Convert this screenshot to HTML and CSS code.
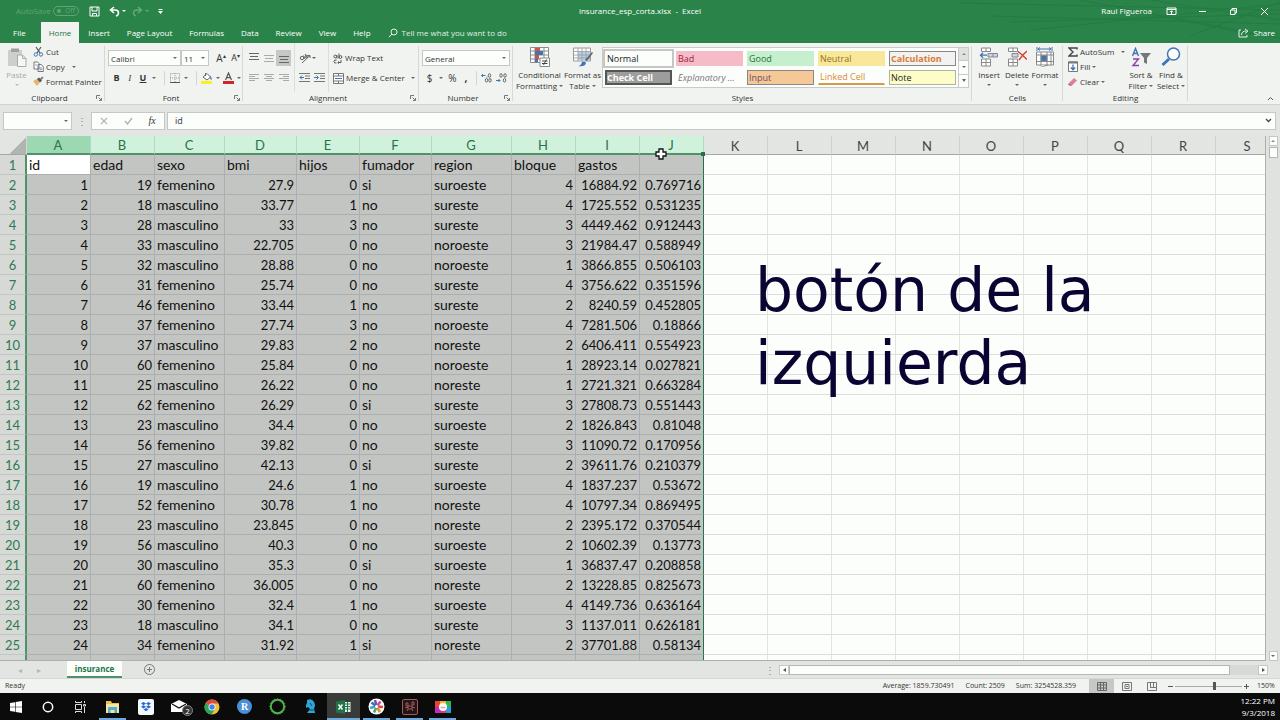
FILE: index.html
```html
<!DOCTYPE html>
<html lang="en">
<head>
<meta charset="utf-8">
<title>insurance_esp_corta.xlsx - Excel</title>
<link rel="stylesheet" href="styles.css">
</head>
<body>
<header class="top">
  <svg class="swirls" width="420" height="43" viewBox="0 0 420 43" fill="none" stroke="#257b43" stroke-width="1"><path d="M100 3L420 10M130 16L420 24M170 30L420 4M220 0L420 38M290 0L420 20M150 22L420 14M330 36L420 2M260 8L400 36"/></svg>
  <div class="titlebar">
    <div class="quick">
      <span class="autosave">AutoSave</span>
      <button class="toggle"><i></i>Off</button>
      <button class="qa save" aria-label="Save"><svg width="11" height="11" viewBox="0 0 11 11" fill="none" stroke="#fff"><path d="M1 1h9v9H1zM3 1v4h5V1M3.500 10V7.500h4V10"/></svg></button>
      <button class="qa" aria-label="Undo"><svg width="18" height="11" viewBox="0 0 18 11"><path d="M5 1L1.500 4L5 7M2 4h4c5 0 4 5 1 6" fill="none" stroke="#fff" stroke-width="1.600"/><path d="M13 4h4l-2 2z" fill="#fff"/></svg></button>
      <button class="qa faded" aria-label="Redo"><svg width="18" height="11" viewBox="0 0 18 11"><path d="M6 1l3.500 3L6 7M9 4H5C0 4 1 9 4 10" fill="none" stroke="#fff" stroke-width="1.300"/><path d="M13 4h4l-2 2z" fill="#fff"/></svg></button>
      <button class="qa" aria-label="Customize toolbar"><svg width="7" height="7" viewBox="0 0 7 7" fill="#fff"><path d="M1.500 1h4v1h-4zM1 3h5L3.500 6z"/></svg></button>
    </div>
    <div class="doc">insurance_esp_corta.xlsx&nbsp; -&nbsp; Excel</div>
    <div class="user">
      <span class="name">Raul Figueroa</span>
      <button aria-label="Ribbon options"><svg width="11" height="9" viewBox="0 0 11 9" fill="none" stroke="#fff"><path d="M1 1h9v6.500H1zM1 2.500h9M5.500 7V4M4 5.200L5.500 3.700L7 5.200"/></svg></button>
      <button aria-label="Minimize"><svg width="9" height="9" viewBox="0 0 9 9" stroke="#fff"><path d="M1 4.500h7"/></svg></button>
      <button aria-label="Restore"><svg width="9" height="9" viewBox="0 0 9 9" fill="none" stroke="#fff"><path d="M1.500 3h4.500v4.500H1.500zM3 3V1.500h4.500V6H6"/></svg></button>
      <button aria-label="Close"><svg width="9" height="9" viewBox="0 0 9 9" stroke="#fff"><path d="M1 1l7 7M8 1L1 8"/></svg></button>
    </div>
  </div>
  <nav class="tabs">
    <button class="file">File</button><button class="on">Home</button><button>Insert</button><button>Page Layout</button><button>Formulas</button><button>Data</button><button>Review</button><button>View</button><button>Help</button>
    <button class="tell"><svg width="10" height="10" viewBox="0 0 10 10" fill="none" stroke="#e6f3ea"><circle cx="6" cy="4" r="3"/><path d="M4 6L.8 9.200"/></svg>Tell me what you want to do</button>
    <button class="share"><svg width="11" height="10" viewBox="0 0 11 10" fill="none" stroke="#e6f3ea"><path d="M3 2H1v7h8V7M3.500 7c0-3 2-4 5-4M7 1l3 2.200L7 5.500"/></svg>Share</button>
  </nav>
</header>

<section class="ribbon">
  <div class="group clipboard">
    <div class="body">
      <button class="big paste"><svg width="20" height="20" viewBox="0 0 20 20"><path d="M1 3h14v16H1z" fill="#cdcecd"/><path d="M4 1.500h8V5H4z" fill="#9fa09f"/><path d="M10.500 8h5l3.500 3.500V19.500h-8.500z" fill="#f6f7f6" stroke="#aaabaa"/><path d="M15.500 8v3.500H19" fill="none" stroke="#aaabaa"/></svg><span>Paste</span><i class="car"></i></button>
      <div class="stack">
        <button><svg width="11" height="11" viewBox="0 0 11 11" fill="none"><path d="M3 1l4 6M8 1L4 7" stroke="#555" stroke-width="1.200"/><circle cx="2.800" cy="8.500" r="1.700" stroke="#3f74b5"/><circle cx="8" cy="8.500" r="1.700" stroke="#3f74b5"/></svg>Cut</button>
        <button><svg width="11" height="11" viewBox="0 0 11 11" fill="#fff" stroke="#777"><path d="M1 1h3.500L6 2.500V8H1zM5 3.500h3L10.300 5.500v5H5z"/><path d="M6.500 7h2.500M6.500 8.700h2.500M2.300 4h1.500" stroke="#3f74b5" stroke-width=".8"/></svg>Copy<i class="car far"></i></button>
        <button><svg width="11" height="11" viewBox="0 0 11 11"><path d="M0 5l4-2 3 3-3 4z" fill="#e8b36a"/><path d="M4 3l2-1.500L9 4.500 7 6.500z" fill="#555"/><path d="M7 2.500L9.500.5l1 1L8.500 4z" fill="#777"/></svg>Format Painter</button>
      </div>
    </div>
    <div class="cap"><span>Clipboard</span><svg class="launch" width="6" height="6" viewBox="0 0 6 6" fill="none" stroke="#777"><path d="M.5 4V.5H4M2.500 2.500L5 5M5.500 3v2.500H3"/></svg></div>
  </div>

  <div class="group font">
    <div class="body rows">
      <div class="line">
        <label class="combo fam"><input value="Calibri" aria-label="Font"><i class="car"></i></label><label class="combo size"><input value="11" aria-label="Font size"><i class="car"></i></label>
        <button class="grow">A<sup>▴</sup></button><button class="shrink">A<sup>▾</sup></button>
      </div>
      <div class="line fmt">
        <button class="b">B</button><button class="it">I</button><button class="u">U</button><i class="car"></i><i class="sep"></i>
        <button aria-label="Borders"><svg width="10" height="10" viewBox="0 0 10 10" fill="none" stroke="#999" stroke-dasharray="1 1"><path d="M.5.5h9v9h-9zM5 0v10M0 5h10"/><path d="M0 9.500h10" stroke="#555" stroke-dasharray="none"/></svg></button><i class="car"></i><i class="sep"></i>
        <button aria-label="Fill color"><svg width="12" height="12" viewBox="0 0 12 12"><path d="M2 5l4-3.500L9.500 5 6 8z" fill="#fff" stroke="#666"/><path d="M4.500 1v3" stroke="#666"/><path d="M9.500 4q2 2 1 4-2-1-1-4" fill="#3f74b5"/><path d="M0 9h11v3H0z" fill="#f4f321"/></svg></button><i class="car"></i>
        <button aria-label="Font color"><svg width="11" height="12" viewBox="0 0 11 12"><path d="M2.500 8L5.500 1l3 7M3.500 5.700h4" fill="none" stroke="#555" stroke-width="1.200"/><path d="M0 9h11v3H0z" fill="#d2222a"/></svg></button><i class="car"></i>
      </div>
    </div>
    <div class="cap"><span>Font</span><svg class="launch" width="6" height="6" viewBox="0 0 6 6" fill="none" stroke="#777"><path d="M.5 4V.5H4M2.500 2.500L5 5M5.500 3v2.500H3"/></svg></div>
  </div>

  <div class="group align">
    <div class="body">
      <div class="rows grid3">
        <div class="line"><button aria-label="Top align"><svg width="10" height="12" viewBox="0 0 10 12" stroke="#666"><path d="M0 1.500h10M1 4.500h8M0 7.500h10" /></svg></button><button aria-label="Middle align"><svg width="10" height="12" viewBox="0 0 10 12" stroke="#aaa"><path d="M0 3.500h10M1 6.500h8M0 9.500h10"/></svg></button><button class="down" aria-label="Bottom align"><svg width="10" height="12" viewBox="0 0 10 12" stroke="#666"><path d="M0 4.500h10M1 7.500h8M0 10.500h10"/></svg></button></div>
        <div class="line"><button aria-label="Align left"><svg width="10" height="10" viewBox="0 0 10 10" stroke="#aaa"><path d="M0 1.500h10M0 3.500h6M0 5.500h10M0 7.500h6"/></svg></button><button aria-label="Center"><svg width="10" height="10" viewBox="0 0 10 10" stroke="#aaa"><path d="M0 1.500h10M2 3.500h6M0 5.500h10M2 7.500h6"/></svg></button><button aria-label="Align right"><svg width="10" height="10" viewBox="0 0 10 10" stroke="#aaa"><path d="M0 1.500h10M4 3.500h6M0 5.500h10M4 7.500h6"/></svg></button></div>
      </div>
      <div class="rows indent">
        <div class="line"><button aria-label="Orientation"><svg width="12" height="12" viewBox="0 0 12 12" fill="none" stroke="#666"><circle cx="3" cy="6" r="1.700"/><path d="M4.500 3.500L6 7M6 2l2.500 4"/><circle cx="7.500" cy="4.500" r="1.300"/><path d="M3 11L11 3.500M11 6V3.500H8.500"/></svg></button><i class="car"></i></div>
        <div class="line"><button aria-label="Decrease indent"><svg width="12" height="10" viewBox="0 0 12 10" fill="none" stroke="#777"><path d="M0 .5h11M6 3h5M6 5.500h5M0 8.500h11"/><path d="M5 4.500H1M3 2.500l-2 2 2 2" stroke="#3f74b5"/></svg></button><button aria-label="Increase indent"><svg width="12" height="10" viewBox="0 0 12 10" fill="none" stroke="#777"><path d="M0 .5h11M6 3h5M6 5.500h5M0 8.500h11"/><path d="M0 4.500h4M2.500 2.500l2 2-2 2" stroke="#3f74b5"/></svg></button></div>
      </div>
      <div class="rows wrap">
        <div class="line"><button><svg width="10" height="11" viewBox="0 0 10 11" fill="none" stroke="#555"><circle cx="2.300" cy="3.500" r="1.400"/><path d="M4 2v3.500M6 .500v5M3.500 7Q1 6.500 1 8.500T3.500 10M5 9.500h3V7M6 8.500l-1.200 1L6 10.500"/><circle cx="7.500" cy="4" r="1.400"/></svg>Wrap Text</button></div>
        <div class="line"><button><svg width="11" height="11" viewBox="0 0 11 11" fill="#fff" stroke="#777"><path d="M.5.5h10v10H.5zM.5 3h10M.5 8h10M5.500 0v3M5.500 8v3"/><path d="M2 5.500h7" stroke="#3f74b5"/></svg>Merge &amp; Center<i class="car far"></i></button></div>
      </div>
    </div>
    <div class="cap"><span>Alignment</span><svg class="launch" width="6" height="6" viewBox="0 0 6 6" fill="none" stroke="#777"><path d="M.5 4V.5H4M2.500 2.500L5 5M5.500 3v2.500H3"/></svg></div>
  </div>

  <div class="group number">
    <div class="body rows">
      <div class="line"><label class="combo gen"><input value="General" aria-label="Number format"><i class="car"></i></label></div>
      <div class="line sym"><button>$</button><i class="car"></i><button>%</button><button class="comma">,</button><i class="sep"></i>
        <button aria-label="Increase decimal"><svg width="11" height="10" viewBox="0 0 11 10" fill="none" stroke="#666"><path d="M4.500 2.500H.5M2 1L.5 2.500 2 4" stroke="#3f74b5"/><path d="M6 3.500v1"/><ellipse cx="8.500" cy="2.500" rx="1.200" ry="1.800"/><ellipse cx="5.500" cy="7.300" rx="1.200" ry="1.800"/><ellipse cx="9" cy="7.300" rx="1.200" ry="1.800"/></svg></button><button aria-label="Decrease decimal"><svg width="11" height="10" viewBox="0 0 11 10" fill="none" stroke="#666"><path d="M0 7.500h4M2.500 6L4 7.500 2.500 9" stroke="#3f74b5"/><ellipse cx="5" cy="2.500" rx="1.200" ry="1.800"/><ellipse cx="9" cy="2.500" rx="1.200" ry="1.800"/><ellipse cx="8.500" cy="7.300" rx="1.200" ry="1.800"/></svg></button>
      </div>
    </div>
    <div class="cap"><span>Number</span><svg class="launch" width="6" height="6" viewBox="0 0 6 6" fill="none" stroke="#777"><path d="M.5 4V.5H4M2.500 2.500L5 5M5.500 3v2.500H3"/></svg></div>
  </div>

  <div class="group styles">
    <div class="body">
      <button class="big cond"><svg width="20" height="20" viewBox="0 0 20 20"><path d="M.5.500h18v15H.5zM.5 4h18M.5 8h18M.5 12h18M5 .5v15M14 .5v15" fill="#fff" stroke="#8a8b8a"/><path d="M5 1h5v3H5zM5 8h4v4H5z" fill="#d0553f"/><path d="M5 4h8v4H5zM5 12h3v3H5z" fill="#3f74b5"/><path d="M10 11h9.500v8.500H10z" fill="#fff" stroke="#888"/><path d="M12 14h5.500M12 16.500h5.500M16.500 12.500l-3 5.500" stroke="#444"/></svg><span>Conditional</span><span>Formatting<i class="car"></i></span></button>
      <button class="big"><svg width="20" height="20" viewBox="0 0 20 20"><path d="M.5 1h17v13H.5z" fill="#fff" stroke="#999"/><path d="M5 4.500h12V14H5z" fill="#b9cfe8"/><path d="M.5 4.500h17M.5 8h17M.5 11h17M5 1v13M9 1v13M13 1v13" stroke="#999" stroke-width=".8"/><path d="M19 5l1 1-6 8-2-1z" fill="#666"/><path d="M5 19q3 0 4-4 3-1 4 1-1 4-8 3" fill="#3f74b5"/></svg><span>Format as</span><span>Table<i class="car"></i></span></button>
      <div class="gallery">
        <div class="swatches">
          <button class="s-normal">Normal</button><button class="s-bad">Bad</button><button class="s-good">Good</button><button class="s-neutral">Neutral</button><button class="s-calc">Calculation</button>
          <button class="s-check">Check Cell</button><button class="s-expl">Explanatory ...</button><button class="s-input">Input</button><button class="s-link">Linked Cell</button><button class="s-note">Note</button>
        </div>
        <div class="gscroll"><button class="off" aria-label="Previous styles"><i class="car up"></i></button><button aria-label="Next styles"><i class="car"></i></button><button class="more" aria-label="More styles"><i class="car"></i></button></div>
      </div>
    </div>
    <div class="cap"><span>Styles</span></div>
  </div>

  <div class="group cells">
    <div class="body">
      <button class="big"><svg width="20" height="20" viewBox="0 0 20 20" fill="#fff" stroke="#888"><path d="M2.500 1h9v3.500h-9zM7 1v3.500M2.500 12h9v7h-9zM7 12v7M2.500 15.500h9"/><path d="M9 6.500h9.500v3.500H9zM14 6.500V10" fill="#c3d6ea"/><path d="M8 8.200H1.500M4 5.700L1.500 8.200 4 10.700" fill="none" stroke="#3f74b5" stroke-width="1.300"/></svg><span>Insert</span><i class="car"></i></button>
      <button class="big"><svg width="20" height="20" viewBox="0 0 20 20" fill="#fff" stroke="#888"><path d="M1.500 1h9v3.500h-9zM6 1v3.500M1.500 12h9v7h-9zM6 12v7M1.500 15.500h9"/><path d="M5 6.500h6v3.500H5z" fill="#c3d6ea"/><path d="M11 4.500q4 3 9 8M20 4q-4 3-8 9" fill="none" stroke="#d0432f" stroke-width="1.500"/></svg><span>Delete</span><i class="car"></i></button>
      <button class="big"><svg width="20" height="20" viewBox="0 0 20 20" fill="#fff" stroke="#888"><path d="M1.500 5h17v13h-17zM1.500 8h17M1.500 14.500h17M6 5v13M12 5v13M16 5v13"/><path d="M6 8.500h6V14H6z" fill="#3f74b5"/><path d="M2 0v4M17 0v4M3 2h13M5 .5L3 2l2 1.500M14 .5L16 2l-2 1.500" fill="none" stroke="#3f74b5"/><path d="M5 18q1 2 4 1l4-1"/></svg><span>Format</span><i class="car"></i></button>
    </div>
    <div class="cap"><span>Cells</span></div>
  </div>

  <div class="group editing">
    <div class="body">
      <div class="stack">
        <button><svg width="10" height="10" viewBox="0 0 10 10" fill="none" stroke="#444" stroke-width="1.400"><path d="M9 2.500V1H1l4 4-4 4h8V7.500"/></svg>AutoSum<i class="car far"></i></button>
        <button><svg width="10" height="11" viewBox="0 0 10 11" fill="#fff" stroke="#777"><path d="M.5 1h9v9.500h-9z"/><path d="M0 1.500h10" stroke-width="2"/><path d="M5 3.500v5M2.800 6.500L5 8.800l2.200-2.300" fill="none" stroke="#3f74b5" stroke-width="1.300"/></svg>Fill<i class="car"></i></button>
        <button><svg width="10" height="10" viewBox="0 0 10 10"><path d="M1 6l5-5 3 2.500-5 5z" fill="#dc7fa0"/><path d="M1 6l3 2.500L2.500 9 0 7.500z" fill="#b7597c"/></svg>Clear<i class="car"></i></button>
      </div>
      <button class="big"><svg width="20" height="20" viewBox="0 0 20 20" fill="none"><path d="M1.500 9l3-7.500 3 7.500M2.500 6.500h4" stroke="#3f74b5" stroke-width="1.400"/><path d="M2 12h5.500L2 18.500h6" stroke="#8a3fb0" stroke-width="1.400"/><path d="M9 6h11l-4 5v6l-3-1.500V11z" fill="#777"/></svg><span>Sort &amp;</span><span>Filter<i class="car"></i></span></button>
      <button class="big"><svg width="20" height="20" viewBox="0 0 20 20" fill="none" stroke="#3f74b5"><circle cx="12.500" cy="7" r="6" fill="#fff" stroke-width="1.500"/><path d="M8 12l-6.500 6" stroke-width="3"/></svg><span>Find &amp;</span><span>Select<i class="car"></i></span></button>
    </div>
    <div class="cap"><span>Editing</span></div>
  </div>
  <button class="collapse" aria-label="Collapse the ribbon"><svg width="7" height="5" viewBox="0 0 7 5" fill="none" stroke="#555"><path d="M1 4l2.500-2.500L6 4"/></svg></button>
</section>

<section class="formula">
  <label class="combo namebox"><input value="" aria-label="Name box"><i class="car"></i></label>
  <span class="dots">⋮</span>
  <div class="fx">
    <button aria-label="Cancel"><svg width="8" height="8" viewBox="0 0 8 8" stroke="#b5b6b5" stroke-width="1.200"><path d="M1 1l6 6M7 1L1 7"/></svg></button>
    <button aria-label="Enter"><svg width="9" height="8" viewBox="0 0 9 8" fill="none" stroke="#b5b6b5" stroke-width="1.500"><path d="M1 4l2.500 3L8 1"/></svg></button>
    <button class="f">fx</button>
  </div>
  <label class="combo entry"><input value="id" aria-label="Formula bar"><svg width="7" height="5" viewBox="0 0 7 5" fill="none" stroke="#444" stroke-width="1.300"><path d="M1 1l2.500 2.500L6 1"/></svg></label>
</section>

<main class="work">
  <div class="sheet">
    <table class="grid"></table>
    <div class="note">botón de la<br>izquierda</div>
    <svg class="pointer" width="12" height="12" viewBox="0 0 12 12"><path d="M4 1h4v3h3v4H8v3H4V8H1V4h3z" fill="#fff" stroke="#111" stroke-width="1.300"/></svg>
  </div>
  <div class="vbar"><button aria-label="Scroll up"><i class="car up"></i></button><div class="thumb"></div><button class="end" aria-label="Scroll down"><i class="car"></i></button></div>
</main>

<footer>
  <div class="sheets">
    <button class="nav" aria-label="Previous sheet">◂</button><button class="nav" aria-label="Next sheet">▸</button>
    <button class="tab">insurance</button>
    <button class="add" aria-label="New sheet"><svg width="11" height="11" viewBox="0 0 11 11" fill="none" stroke="#777"><circle cx="5.500" cy="5.500" r="5"/><path d="M5.500 3v5M3 5.500h5"/></svg></button>
    <span class="dots">⋮</span>
    <div class="hbar"><button aria-label="Scroll left"><i class="car left"></i></button><div class="thumb"></div><button class="end" aria-label="Scroll right"><i class="car right"></i></button></div>
  </div>
  <div class="status">
    <span>Ready</span>
    <span class="avg">Average: 1859.730491</span><span>Count: 2509</span><span>Sum: 3254528.359</span>
    <div class="views">
      <button class="down" aria-label="Normal view"><svg width="10" height="9" viewBox="0 0 10 9" fill="none" stroke="#666"><path d="M.5.5h9v8h-9zM.5 3h9M.5 6h9M3.500 0v9M6.500 0v9"/></svg></button>
      <button aria-label="Page layout view"><svg width="10" height="9" viewBox="0 0 10 9" fill="none" stroke="#777"><path d="M.5.5h9v8h-9zM3 2.500h4v4H3zM4 4.500h2"/></svg></button>
      <button aria-label="Page break view"><svg width="10" height="9" viewBox="0 0 10 9" fill="none" stroke="#777"><path d="M.5.5h9v8h-9zM3.500 0v5M6.500 0v5M3 5.500h6"/></svg></button>
    </div>
    <div class="zoom"><button aria-label="Zoom out"><svg width="5" height="5" viewBox="0 0 5 5" stroke="#555"><path d="M0 2.500h5"/></svg></button><input type="range" min="0" max="100" value="59" aria-label="Zoom"><button aria-label="Zoom in"><svg width="5" height="5" viewBox="0 0 5 5" stroke="#555"><path d="M0 2.500h5M2.500 0v5"/></svg></button></div>
    <span class="pct">150%</span>
  </div>
</footer>

<nav class="taskbar">
  <button class="sys" aria-label="Start"><svg width="12" height="12" viewBox="0 0 12 12" fill="#fff"><path d="M0 2l5-.8v4.500H0zM5.600 1L12 0v5.700H5.600zM0 6.300h5v4.500L0 10zM5.600 6.300H12V12l-6.400-1z"/></svg></button>
  <button class="sys" aria-label="Cortana"><svg width="12" height="12" viewBox="0 0 12 12" fill="none" stroke="#fff" stroke-width="1.500"><circle cx="6" cy="6" r="4.700"/></svg></button>
  <button class="sys" aria-label="Task view"><svg width="12" height="12" viewBox="0 0 12 12" fill="none" stroke="#ddd"><path d="M1.500 3.500h6v5h-6zM1.500 0v1.500h6V0M1.500 12v-1.500h6V12M10.500 0v2M10.500 6v6M9.500 3.500h2v1.500h-2z"/></svg></button>
  <button class="open" aria-label="File Explorer"><svg width="15" height="14" viewBox="0 0 15 14"><path d="M1 1h5l1 2h7v10H1z" fill="#e9c050"/><path d="M1 4h13v9H1z" fill="#fbe59b"/><path d="M3 7h9v6H9.500v-3h-4v3H3z" fill="#4bb0d6"/></svg></button>
  <button aria-label="Dropbox"><svg width="16" height="16" viewBox="0 0 16 16"><rect width="16" height="16" rx="2" fill="#f4f9ff"/><path d="M5.500 3L8 4.600 5.500 6.200 3 4.600zM10.500 3L13 4.600l-2.500 1.600L8 4.600zM5.500 6.200L8 7.800 5.500 9.400 3 7.800zM10.500 6.200L13 7.800l-2.500 1.600L8 7.800zM8 9l2.500 1.600L8 12.200l-2.500-1.600z" fill="#2468d8"/></svg></button>
  <button class="mail" aria-label="Mail"><svg width="16" height="13" viewBox="0 0 16 13"><path d="M0 4L8 0l8 4v8H0z" fill="#fff"/><path d="M1 4l7 4 7-4" fill="none" stroke="#111" stroke-width="1.200"/></svg><b>2</b></button>
  <button aria-label="Chrome"><svg width="16" height="16" viewBox="0 0 16 16"><circle cx="8" cy="8" r="7.500" fill="#f0c130"/><path d="M8 8L1.500 4.200A7.500 7.500 0 0 1 14.500 4.500H8z" fill="#dd4b3e"/><path d="M8 8L1.500 4.200A7.500 7.500 0 0 0 7.500 15.500L11 10z" fill="#2ba45a"/><circle cx="8" cy="8" r="3.500" fill="#fff"/><circle cx="8" cy="8" r="2.700" fill="#4484e8"/></svg></button>
  <button class="r" aria-label="RStudio"><span>R</span></button>
  <button aria-label="Anaconda"><svg width="17" height="17" viewBox="0 0 17 17" fill="none"><circle cx="8.500" cy="8.500" r="6.700" stroke="#4cb648" stroke-width="2"/><circle cx="8.500" cy="8.500" r="7.800" stroke="#4cb648" stroke-dasharray="1 2"/></svg></button>
  <button aria-label="Chess"><svg width="11" height="15" viewBox="0 0 11 15" fill="#29a9d4"><path d="M2 1q5-2 7 2 2 4 0 6l1 5H2l3-4-2-2-2 1V6l1-2z"/><path d="M5 4l2 3M4 11h5" stroke="#126" stroke-width=".8"/></svg></button>
  <button class="open active" aria-label="Excel"><svg width="15" height="14" viewBox="0 0 15 14"><path d="M8 2h6.500v10H8z" fill="#e8f5ec"/><path d="M9 4h5M9 6.500h5M9 9h5M11.500 2v10" stroke="#217346"/><path d="M0 1.500L9 0v14L0 12.500z" fill="#217346"/><path d="M2.500 4.500l4 5M6.500 4.500l-4 5" stroke="#fff" stroke-width="1.400"/></svg></button>
  <button class="open" aria-label="Photos"><svg width="17" height="17" viewBox="0 0 17 17"><circle cx="8.500" cy="8.500" r="8" fill="#fff"/><g stroke-width="2.600"><path d="M8.500 8L7 2" stroke="#7a4fb5"/><path d="M9 8l3.500-4.500" stroke="#d04c9c"/><path d="M9 8.500L15 9" stroke="#d94b3c"/><path d="M9 9l3 5" stroke="#e58a3c"/><path d="M8.500 9L6 14.500" stroke="#4ca865"/><path d="M8 8.500L2 10" stroke="#3aa6c8"/><path d="M8 8L3.500 4.500" stroke="#3f6fb5"/></g><circle cx="8.500" cy="8.500" r="1.500" fill="#fff"/></svg></button>
  <button class="open" aria-label="Recorder"><svg width="16" height="16" viewBox="0 0 16 16" fill="none" stroke="#a35a5a"><rect x=".5" y=".5" width="15" height="15" rx="1.500" fill="#211517"/><path d="M4 4h2v3H4zM10 3h2v3h-2zM6 7h4v3H6zM5 12l1-2M11 12l-1-2M3 9l3-1M10 8l3 1"/></svg></button>
  <button class="open" aria-label="Creative Cloud"><svg width="16" height="12" viewBox="0 0 16 12"><path d="M0 0h5v6H0z" fill="#e8452c"/><path d="M5 0h6v6H5z" fill="#f3b52e"/><path d="M11 0h5v6h-5z" fill="#35b454"/><path d="M0 6h6v6H0z" fill="#c52bb8"/><path d="M6 6h5v6H6z" fill="#e83877"/><path d="M11 6h5v6h-5z" fill="#249fd8"/><circle cx="8" cy="6" r="4" fill="#fff"/><path d="M5.500 6.500h5" stroke="#e8a0a0" stroke-width="1.500"/></svg></button>
  <div class="clock"><span>12:22 PM</span><span>9/3/2018</span></div>
</nav>
<script src="grid.js"></script>
</body>
</html>
```
FILE: grid.js
```js
const widths = [27, 64, 64, 70, 72, 63, 72, 80, 64, 64, 64, 64, 64, 64, 64, 64, 64, 64, 64, 64];
const letters = "ABCDEFGHIJKLMNOPQRS".split("");
const rows = `id,edad,sexo,bmi,hijos,fumador,region,bloque,gastos,
1,19,femenino,27.9,0,si,suroeste,4,16884.92,0.769716
2,18,masculino,33.77,1,no,sureste,4,1725.552,0.531235
3,28,masculino,33,3,no,sureste,3,4449.462,0.912443
4,33,masculino,22.705,0,no,noroeste,3,21984.47,0.588949
5,32,masculino,28.88,0,no,noroeste,1,3866.855,0.506103
6,31,femenino,25.74,0,no,sureste,4,3756.622,0.351596
7,46,femenino,33.44,1,no,sureste,2,8240.59,0.452805
8,37,femenino,27.74,3,no,noroeste,4,7281.506,0.18866
9,37,masculino,29.83,2,no,noreste,2,6406.411,0.554923
10,60,femenino,25.84,0,no,noroeste,1,28923.14,0.027821
11,25,masculino,26.22,0,no,noreste,1,2721.321,0.663284
12,62,femenino,26.29,0,si,sureste,3,27808.73,0.551443
13,23,masculino,34.4,0,no,suroeste,2,1826.843,0.81048
14,56,femenino,39.82,0,no,sureste,3,11090.72,0.170956
15,27,masculino,42.13,0,si,sureste,2,39611.76,0.210379
16,19,masculino,24.6,1,no,suroeste,4,1837.237,0.53672
17,52,femenino,30.78,1,no,noreste,4,10797.34,0.869495
18,23,masculino,23.845,0,no,noreste,2,2395.172,0.370544
19,56,masculino,40.3,0,no,suroeste,2,10602.39,0.13773
20,30,masculino,35.3,0,si,suroeste,1,36837.47,0.208858
21,60,femenino,36.005,0,no,noreste,2,13228.85,0.825673
22,30,femenino,32.4,1,no,suroeste,4,4149.736,0.636164
23,18,masculino,34.1,0,no,sureste,3,1137.011,0.626181
24,34,femenino,31.92,1,si,noreste,2,37701.88,0.58134
,,,,,,,,,`.split("\n").map(line => line.split(","));

const cell = (text, col, row) => {
  const cls = [];
  if (col < 10) cls.push("sel");
  if (col === 9) cls.push("last");
  if (row === 0 && col === 0) cls.push("cur");
  if (text !== "" && !isNaN(text)) cls.push("num");
  return `<td class="${cls.join(" ")}">${text}</td>`;
};

document.querySelector(".grid").innerHTML =
  "<colgroup>" + widths.map(w => `<col style="width:${w}px">`).join("") + "</colgroup>" +
  '<thead><tr><th class="corner"></th>' +
  letters.map((l, i) => `<th class="${i === 0 ? "hot first" : i < 10 ? "hot" : ""}${i === 9 ? " handle" : ""}">${l}</th>`).join("") +
  "</tr></thead><tbody>" +
  rows.map((r, n) => `<tr><th>${n < 25 ? n + 1 : ""}</th>` + letters.map((_, c) => cell(r[c] || "", c, n)).join("") + "</tr>").join("") +
  "</tbody>";
```
FILE: styles.css
```css
* { box-sizing: border-box; }
body { margin: 0; height: 100vh; display: flex; flex-direction: column; overflow: hidden; font: 8px/10px "Open Sans", "Noto Sans", sans-serif; color: #333; background: #e3e5e3; }
button, input { font: inherit; color: inherit; border: 0; padding: 0; margin: 0; background: none; white-space: nowrap; }
button { display: flex; align-items: center; justify-content: center; }
svg { flex: none; display: block; }

.car { flex: none; width: 0; height: 0; border: 2px solid transparent; border-top-color: #666; border-bottom: 0; }
.car.up { border-top: 0; border-bottom: 2px solid #888; }
.car.left { border: 2px solid transparent; border-right: 3px solid #555; border-left: 0; }
.car.right { border: 2px solid transparent; border-left: 3px solid #555; border-right: 0; }
.sep { width: 1px; height: 14px; background: #d4d5d4; }

.top { position: relative; flex: none; background: #2a8349; color: #fff; }
.swirls { position: absolute; right: 0; top: 0; }
.titlebar { position: relative; display: grid; grid-template-columns: 1fr auto 1fr; align-items: center; height: 22px; }
.quick { display: flex; align-items: center; padding-left: 16px; }
.autosave { color: #5fa578; width: 37px; }
.toggle { width: 26px; height: 10px; border: 1px solid #5fa578; border-radius: 5px; color: #5fa578; gap: 4px; font-size: 7px; }
.toggle i { width: 4px; height: 4px; border-radius: 2px; background: #5fa578; }
.qa { margin-right: 5px; }
.save { margin: 0 9px 0 10px; }
.faded { opacity: .3; margin-right: 7px; }
.user { display: flex; justify-content: flex-end; align-items: center; }
.name { margin-right: 4px; }
.user button { width: 31px; height: 20px; }
.tabs { position: relative; display: flex; height: 21px; }
.tabs button { padding: 0 8px 0 9px; }
.tabs .file { padding: 0 15px 0 13px; }
.tabs .on { padding: 0 8px; background: #f1f3f1; color: #217346; }
.tabs .tell { color: #e0efe5; gap: 4px; }
.tabs .share { margin-left: auto; padding: 0 5px; gap: 5px; }

.ribbon { flex: none; display: flex; height: 62px; background: #f1f3f1; border-bottom: 1px solid #d0d2d0; }
.group { flex: none; display: flex; flex-direction: column; position: relative; }
.group::after { content: ""; position: absolute; right: 0; top: 3px; bottom: 3px; width: 1px; background: #d6d8d6; }
.body { flex: 1; display: flex; }
.cap { display: flex; align-items: center; height: 12px; padding: 0 3px; }
.cap span { flex: 1; text-align: center; }
.clipboard { width: 105px; }
.font { width: 138px; }
.align { width: 176px; }
.number { width: 94px; }
.styles { width: 459px; }
.cells { width: 91px; }
.editing { width: 125px; }
.stack { display: flex; flex-direction: column; padding-top: 1px; }
.stack button { height: 15px; gap: 2px; justify-content: flex-start; }
.stack .far { margin-left: 5px; }
.big { flex-direction: column; justify-content: flex-start; padding-top: 4px; line-height: 11px; }
.big svg { margin-bottom: 2px; }
.big > .car { margin-top: 4px; }
.big span { display: flex; align-items: center; gap: 2px; }
.paste { width: 33px; color: #aaa; }
.paste .car { border-top-color: #bbb; }
.rows { display: flex; flex-direction: column; gap: 4px; padding-top: 7px; }
.line { display: flex; align-items: center; height: 16px; }
.combo { display: flex; align-items: center; height: 16px; background: #fcfefc; border: 1px solid #c6c8c6; padding-right: 3px; }
.combo input { flex: 1; min-width: 0; width: 0; height: 14px; padding: 0 2px; outline: 0; background: none; }
.font .rows { padding-left: 3px; }
.fam { width: 74px; }
.size { width: 29px; margin-right: 4px; }
.grow { font-size: 10px; width: 15px; }
.shrink { font-size: 9px; width: 15px; }
sup { font-size: 6px; line-height: 6px; align-self: flex-start; }
.fmt { padding-left: 2px; }
.fmt button { width: 15px; font-size: 9px; }
.fmt .sep { margin: 0 4px 0 6px; }
.fmt .car { margin: 0 2px; }
.b { font-weight: 700; }
.it { font-style: italic; font-family: "Liberation Serif", serif; }
.u { text-decoration: underline; font-weight: 700; }
.grid3 { padding-left: 3px; }
.grid3 button { width: 15px; height: 16px; }
.down { background: #c6c8c6; }
.indent { margin-left: 3px; padding-left: 2px; border-left: 1px solid #dcdedc; }
.indent button { width: 15px; }
.wrap { margin-left: 1px; padding-left: 4px; border-left: 1px solid #dcdedc; }
.wrap button { gap: 2px; }
.far { margin-left: 4px; }
.number .rows { padding-left: 3px; }
.gen { width: 88px; }
.sym button { width: 15px; font-size: 10px; }
.sym .comma { width: 12px; font-weight: 700; }
.sym .car { margin: 0 2px; }
.sym .sep { margin: 0 2px 0 4px; }
.sym button[aria-label] { width: 15px; }
.styles .body { padding-left: 5px; }
.styles .big { width: 43px; }
.gallery { display: flex; height: 41px; margin: 4px 0 0 -2px; border: 1px solid #c9cbc9; background: #fcfefc; }
.swatches { display: grid; grid-template-columns: repeat(5, 67px); grid-auto-rows: 15px; gap: 4px; padding: 3px 2px; }
.swatches button { justify-content: flex-start; padding-left: 1px; font-size: 9px; border: 1px solid transparent; }
.s-normal { color: #222; outline: 2px solid #c5c7c5; }
.s-bad { background: #f5bcc8; color: #9c1f3a; }
.s-good { background: #c6efce; color: #25713a; }
.s-neutral { background: #f9e89a; color: #96701a; }
.swatches .s-calc { background: #f1f2f1; border-color: #888; color: #dd7a35; font-weight: 700; }
.swatches .s-check { background: #9c9d9c; border: 2px solid #555; padding-left: 0; color: #fff; font-weight: 700; }
.s-expl { color: #777; font-style: italic; }
.swatches .s-input { background: #f6c797; border-color: #888; color: #6b4f63; }
.swatches .s-link { border-bottom: 2px solid #d39a48; color: #d98c35; }
.swatches .s-note { background: #fcfdc8; border-color: #b3b4a0; color: #222; }
.gscroll { display: flex; flex-direction: column; flex: 1; width: 10px; border-left: 1px solid #c9cbc9; }
.gscroll button { flex: 1; border-bottom: 1px solid #c9cbc9; }
.gscroll .off { background: #dfe1df; }
.gscroll .more { border-bottom: 0; }
.more .car { border-top-width: 3px; }
.cells .body { padding-left: 3px; }
.cells .big { width: 28px; }
.editing .stack { width: 63px; padding-left: 5px; }
.editing .big { width: 30px; }
.collapse { margin: auto 6px 2px auto; height: 7px; }

.formula { flex: none; display: flex; align-items: center; height: 31px; padding: 0 4px 0 3px; }
.formula .combo, .fx { height: 18px; }
.namebox { width: 69px; }
.dots { width: 19px; text-align: center; font-size: 10px; color: #888; }
.fx { display: flex; width: 74px; background: #fcfefc; border: 1px solid #c6c8c6; }
.fx button { flex: 1; }
.fx .f { font: italic 10px/12px "Liberation Serif", serif; }
.entry { flex: 1; margin-left: 2px; }
.entry input { padding-left: 7px; font-size: 9px; }

.work { flex: 1; min-height: 0; display: flex; }
.sheet { flex: 1; min-width: 0; position: relative; overflow: hidden; background: #fcfefc; border-bottom: 1px solid #adafad; border-right: 1px solid #adafad; }
.grid { table-layout: fixed; border-collapse: separate; border-spacing: 0; width: 1280px; font: 14px/17px Lato, "Open Sans", sans-serif; color: #111; }
.grid th, .grid td { padding: 0 2px; height: 20px; text-align: left; font-weight: 400; white-space: nowrap; border-right: 1px solid #e2e4e2; border-bottom: 1px solid #dcdedc; overflow: hidden; }
.grid thead th { padding: 1px 1px 0 0; height: 19px; font-size: 13px; line-height: 16px; text-align: center; background: #e3e5e3; color: #444; border-bottom: 1px solid #a5a7a5; border-right-color: #cfd1cf; }
.grid thead .hot { background: #d0f2dc; color: #2a7349; border-bottom: 2px solid #4f9168; border-right-color: #b5d8c2; }
.grid thead .first { background: #9cd9b2; }
.grid thead .handle { position: relative; overflow: visible; }
.handle::after { content: ""; position: absolute; right: -2px; bottom: -3px; width: 4px; height: 4px; background: #217346; }
.grid thead .corner { background: linear-gradient(135deg, #e3e5e3 62%, #b2b4b2 62%); border-right-color: #d5d7d5; }
.grid tbody th { text-align: center; padding: 2px 0 0; font-size: 13px; color: #2f7a50; background: #d7d9d7; border-right: 2px solid #4f9168; border-bottom-color: #c3c5c3; }
.grid .sel { background: #c3c5c3; border-right-color: #acaeb0; border-bottom-color: #acaeb0; }
.grid .cur { background: #fff; }
.grid .last { border-right-color: #217346; }
.grid .num { text-align: right; font-size: 13px; padding-top: 2px; }
.note { position: absolute; left: 755px; top: 118px; font: 60px/73px "DejaVu Sans", sans-serif; color: #0b0332; }
.pointer { position: absolute; left: 655px; top: 12px; }
.vbar { flex: none; display: flex; flex-direction: column; align-items: center; width: 14px; background: #e0e2e0; }
.vbar button, .hbar button { width: 9px; height: 10px; background: #fcfefc; border: 1px solid #c6c8c6; }
.vbar .thumb { width: 9px; height: 11px; margin-top: 1px; background: #fcfefc; border: 1px solid #b5b7b5; }
.vbar .end { margin-top: auto; }

footer { flex: none; }
.sheets { display: flex; align-items: center; height: 18px; padding: 0 12px 0 10px; background: #e3e5e3; border-bottom: 1px solid #d5d7d5; }
.nav { width: 19px; color: #b5b7b5; }
.sheets .tab { align-self: flex-start; width: 55px; height: 17px; margin-left: 19px; background: #fcfefc; border-bottom: 2px solid #4f9168; color: #217346; font-weight: 700; }
.add { margin: 0 auto 0 22px; }
.hbar { display: flex; align-items: center; width: 489px; height: 10px; background: #d7d9d7; }
.hbar .thumb { width: 441px; height: 10px; background: #fcfefc; border: 1px solid #b5b7b5; }
.hbar button { width: 10px; }
.hbar .end { margin-left: auto; }
.status { display: flex; align-items: center; height: 14px; padding: 0 5px; background: #f1f3f1; gap: 11px; font-size: 7px; }
.avg { margin-left: auto; }
.views { display: flex; margin-left: 2px; }
.views button { width: 25px; height: 14px; }
.zoom { display: flex; align-items: center; gap: 2px; margin-left: -7px; }
.zoom input { appearance: none; width: 67px; height: 10px; background: linear-gradient(#aaa, #aaa) center / 100% 1px no-repeat; }
.zoom input::-webkit-slider-thumb { appearance: none; width: 3px; height: 8px; background: #555; }
.pct { margin-left: -3px; width: 18px; }

.taskbar { flex: none; display: flex; height: 27px; background: #0a0b0a; color: #fff; }
.taskbar button { position: relative; width: 33px; }
.taskbar .sys { width: 32px; }
.open::after { content: ""; position: absolute; left: 3px; right: 3px; bottom: 0; height: 2px; background: #6fa9dc; }
.taskbar .active { background: #3a3c3a; }
.active::after { left: 0; right: 0; }
.mail b { position: absolute; right: 2px; bottom: 4px; width: 11px; height: 11px; border-radius: 6px; background: #333; border: 1px solid #888; font-size: 8px; line-height: 9px; font-weight: 400; }
.r span { width: 15px; height: 15px; border-radius: 8px; background: #4b8fd6; font: 700 10px/15px "Liberation Serif", serif; }
.clock { display: flex; flex-direction: column; justify-content: center; align-items: flex-end; margin-left: auto; padding-right: 5px; line-height: 12px; }
```
